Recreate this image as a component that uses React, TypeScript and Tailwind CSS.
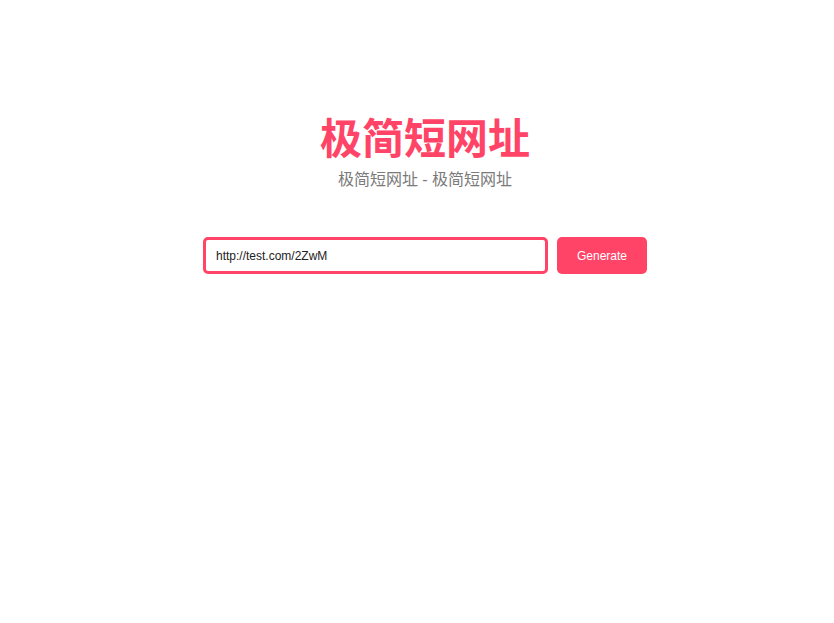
export default function App() {
  return (
    <div
      className="min-h-[623px] w-full bg-white pl-4"
      style={{ fontFamily: '"Liberation Sans", Arial, "Noto Sans CJK SC", sans-serif' }}
    >
      <div className="flex flex-col items-center pt-[112px]">
        <h1 className="text-[42px] font-bold leading-[56px] text-[#ff4467]">极简短网址</h1>
        <p className="mt-[2px] text-[16px] leading-[20px] text-[#7a7a7a]">极简短网址 - 极简短网址</p>
        <div className="mt-[47px] flex items-center gap-[9px]">
          <input
            type="text"
            defaultValue="http://test.com/2ZwM"
            className="h-[37px] w-[345px] rounded-[5px] border-[3px] border-[#ff4467] px-[10px] text-[12px] text-[#222] outline-none"
          />
          <button className="h-[37px] w-[90px] rounded-[5px] bg-[#ff4467] text-[12px] text-white">
            Generate
          </button>
        </div>
      </div>
    </div>
  );
}
